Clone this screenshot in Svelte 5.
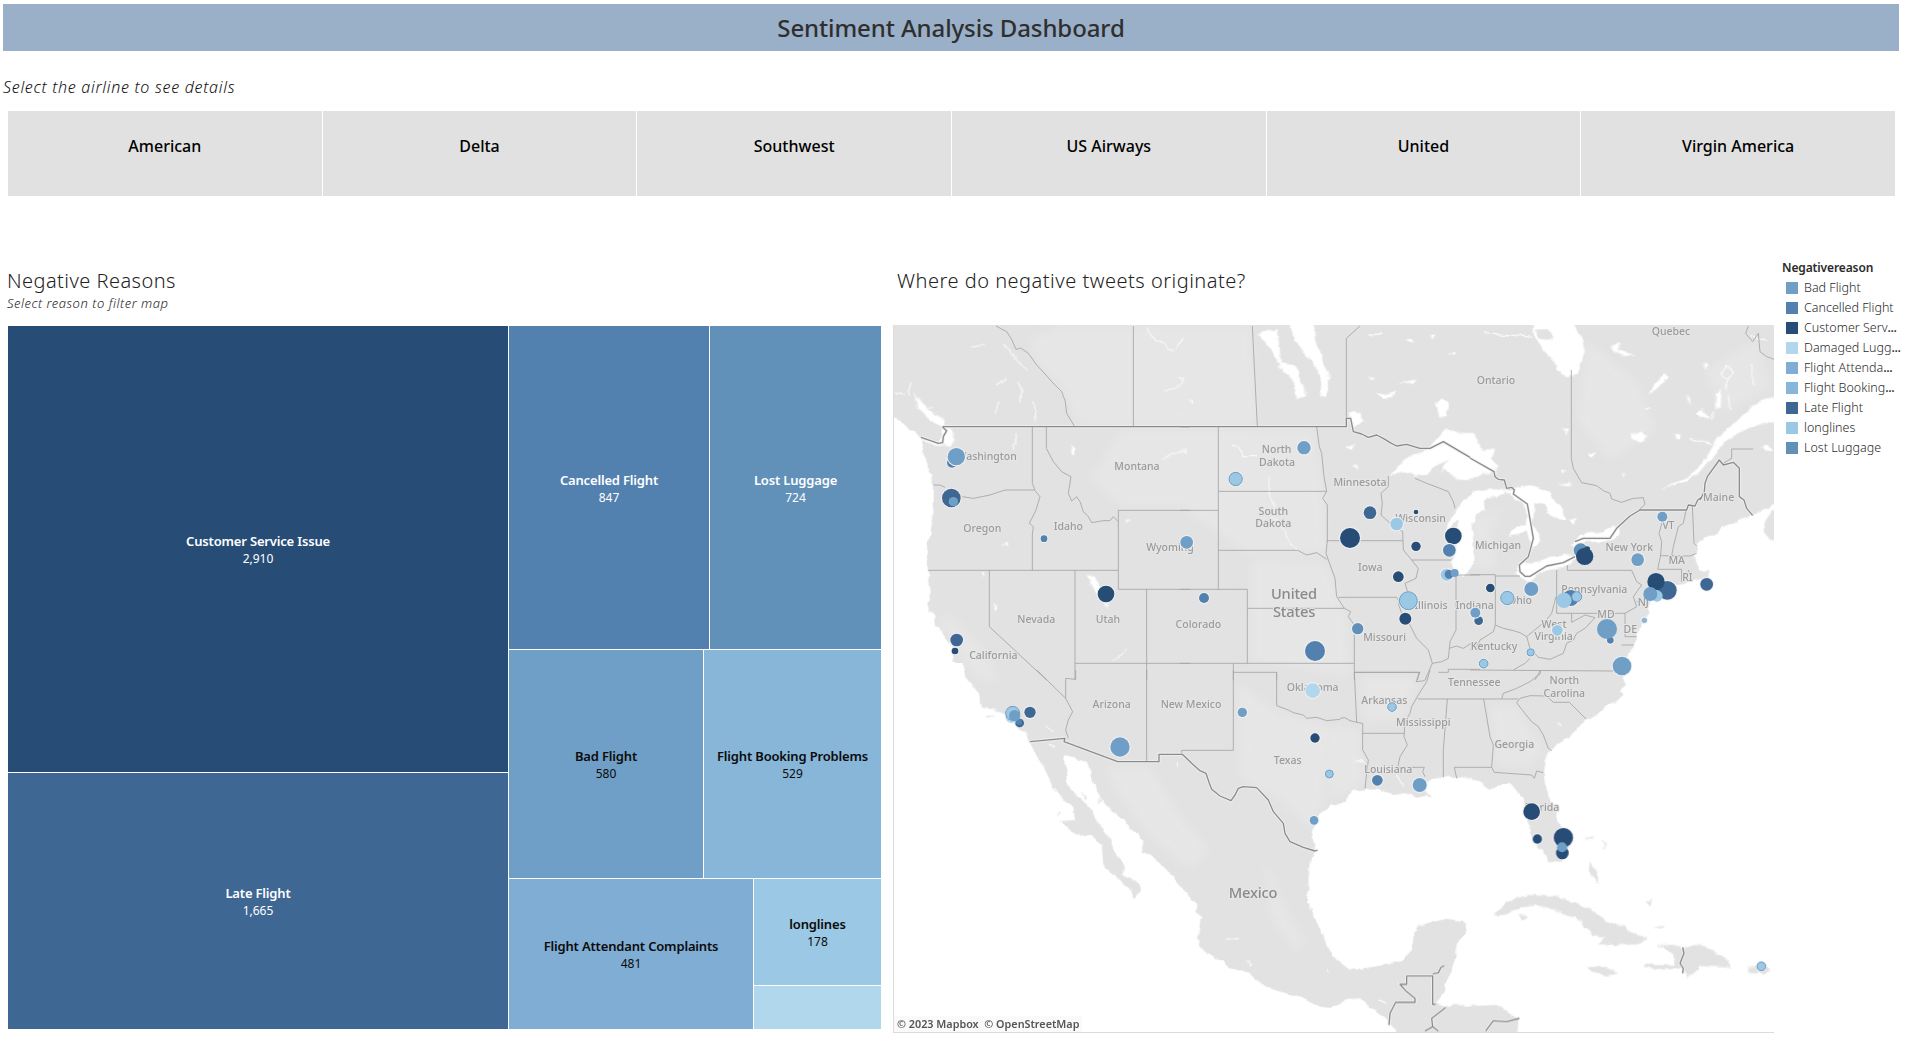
<script>
  const airlines = ['American', 'Delta', 'Southwest', 'US Airways', 'United', 'Virgin America'];

  const colors = {
    bad: '#6f9fc6',
    cancelled: '#5381af',
    customer: '#274d77',
    damaged: '#b0d7ec',
    attendant: '#7fadd3',
    booking: '#87b6d9',
    late: '#3e6793',
    longlines: '#9bc8e4',
    lost: '#6190b9'
  };

  const legend = [
    ['bad', 'Bad Flight', false],
    ['cancelled', 'Cancelled Flight', false],
    ['customer', 'Customer Serv', true],
    ['damaged', 'Damaged Lugg', true],
    ['attendant', 'Flight Attenda', true],
    ['booking', 'Flight Booking', true],
    ['late', 'Late Flight', false],
    ['longlines', 'longlines', false],
    ['lost', 'Lost Luggage', false]
  ];

  // Map geometry is split into sheets; each sheet has its own origin in map units.
  const sheets = {
    nw: [0, 0],
    n: [870, 0],
    ne: [1740, 0],
    sw: [0, 1050],
    se: [1320, 1050],
    lakes: [1440, 270]
  };
  const at = (s) => `translate(${sheets[s][0]} ${sheets[s][1]})`;

  const water = [
    ['nw', 'M75,215 L90,245 125,275 160,300 165,320 185,325 195,355 185,378 165,375 145,378 95,360 93,350 145,366 158,345 155,322 110,292 85,265Z'],
    ['nw', 'M592,765 L615,770 626,795 638,812 622,820 602,795Z M645,850 L658,852 650,865Z M543,375 L555,380 556,400 546,408Z M310,850 L322,860 320,875Z M705,600 L718,598 715,612Z M275,755 L284,752 280,768Z M335,675 L352,668 355,676Z'],
    ['n', 'M325,0 L400,0 405,60 425,110 448,175 440,228 420,225 425,175 400,130 375,100 345,60Z M230,40 L290,28 300,90 302,130 345,135 378,230 350,238 340,180 300,145 280,95 250,60Z M765,250 L790,235 805,255 800,290 775,290Z M505,275 L545,280 550,305 520,322Z M495,385 L525,372 510,390Z M520,435 L535,432 538,445Z M675,60 L695,55 700,68Z M590,220 L620,225 645,215 635,235 605,238Z M660,190 L710,175 700,188Z M805,98 L828,96 825,104Z M570,172 L590,176 575,180Z M25,240 L40,242 35,252Z M750,45 L765,48 758,58Z'],
    ['ne', 'M188,0 L188,45 215,75 225,100 250,120 265,155 290,172 325,165 330,130 345,95 335,50 300,0Z'],
    ['ne', 'M950,230 L912,235 870,242 835,270 790,310 745,350 725,385 700,430 660,465 620,485 578,507 640,487 695,452 735,402 775,355 830,327 880,310 950,305Z'],
    ['ne', 'M540,225 L555,185 585,160 598,168 575,190 555,215Z M480,345 L510,332 535,350 515,365 490,360Z M612,340 L635,345 632,356 615,352Z M275,325 L298,330 290,345Z M352,400 L378,398 365,412Z M425,75 L450,62 440,90 495,105 460,108 430,95Z M675,280 L695,265 720,295 690,290Z M740,225 L755,210 752,265 738,270Z M652,225 L662,235 660,255Z M700,130 L712,135 708,150Z M265,492 L305,490 300,500Z M275,445 L288,450 280,462Z M455,460 L468,462 462,472Z M872,382 L895,375 910,390 890,392Z'],
    ['lakes', 'M62,195 L90,160 130,135 175,120 195,85 235,55 270,70 310,68 335,115 372,120 365,140 385,165 375,188 345,190 300,210 260,205 240,190 225,178 212,188 235,152 200,165 170,190 140,200 120,185 90,190Z'],
    ['lakes', 'M400,240 L350,236 310,245 285,265 260,300 245,320 230,345 225,365 262,330 265,370 255,430 245,460 255,490 280,499 300,480 315,440 310,390 305,350 320,310 345,300 345,275 370,258 405,252 430,255Z'],
    ['lakes', 'M400,242 L445,270 468,300 470,345 440,350 415,380 450,374 470,362 478,390 492,418 512,385 488,340 495,280 520,285 545,320 590,330 580,300 555,275 540,245 480,228 430,238Z M600,330 L618,325 615,345Z'],
    ['lakes', 'M450,455 L435,488 470,512 530,482 600,465 625,440 590,435 540,440 490,462Z M608,405 L630,374 700,364 725,350 748,352 745,378 722,395 645,396 618,410Z']
  ];

  const ocean = [
    ['nw', 'M-40,270 L10,292 40,312 70,335 93,352 100,380 100,405 112,430 115,455 127,465 128,500 128,545 126,600 122,640 112,670 110,700 108,730 117,752 118,790 122,815 112,850 118,875 135,890 138,920 165,950 185,980 188,1010 200,1030 218,1055 218,1100 -40,1100Z'],
    ['sw', 'M217,-20 L225,20 245,45 270,72 275,112 310,118 345,135 360,155 385,175 408,185 420,213 425,230 445,260 460,290 480,330 487,355 515,380 550,410 555,450 515,452 540,480 580,500 600,495 635,525 640,590 690,630 722,660 730,683 752,665 745,640 715,625 700,615 705,590 690,565 665,535 665,510 640,480 620,450 605,420 580,390 550,370 535,345 530,300 520,260 535,253 560,268 590,275 600,300 605,330 625,370 640,400 680,435 710,455 715,475 745,490 760,520 755,545 790,560 830,600 865,640 890,670 918,700 920,730 935,745 930,780 920,805 945,850 1000,875 1020,895 1080,912 1110,940 1170,965 1230,980 1290,1010 1320,1014 1350,1002 1380,985 1415,990 1450,1015 1490,1050 1530,1095 -40,1120 -40,-20Z'],
    ['se', 'M1370,-495 L1332,-495 1290,-475 1270,-462 1245,-455 1210,-442 1180,-430 1160,-410 1120,-400 1110,-385 1100,-360 1092,-345 1095,-325 1105,-305 1120,-295 1138,-298 1135,-275 1110,-270 1080,-265 1050,-260 1020,-250 980,-235 965,-220 955,-195 955,-170 940,-145 920,-115 917,-85 910,-65 880,-30 865,-10 890,10 880,30 888,45 870,60 880,75 855,95 830,105 795,140 765,150 740,180 715,200 680,225 660,245 645,270 640,300 645,340 655,375 668,405 685,450 705,490 715,530 700,568 655,578 650,555 625,535 605,500 600,470 592,455 585,415 585,390 560,360 535,338 510,345 480,358 460,340 430,325 400,320 380,328 355,318 320,325 295,328 280,345 290,365 308,383 290,378 262,382 240,375 215,372 190,375 165,362 130,358 105,358 75,362 55,375 50,395 20,405 0,408 -30,430 -45,470 -55,500 -42,540 -62,580 -64,650 -65,700 -50,740 -20,790 0,845 20,870 60,900 130,890 190,880 220,870 245,840 252,790 265,768 310,755 350,747 395,752 408,765 405,790 385,815 378,850 370,885 360,905 350,930 345,960 320,995 340,1010 370,1005 430,1008 500,1005 530,1025 565,1050 562,1120 1370,1120Z']
  ];

  const land = [
    ['se', 'M493,735 L520,705 555,685 605,673 680,678 720,695 760,710 800,730 830,755 885,770 895,785 955,808 920,820 803,823 825,800 790,795 765,770 755,750 710,735 680,722 625,705 570,712 515,735Z M570,735 L592,740 580,752Z M775,890 L830,892 862,910 825,917 790,908Z'],
    ['se', 'M985,828 L1020,825 1055,835 1100,825 1140,838 1195,870 1200,892 1150,890 1110,888 1075,920 1055,895 1000,898 945,890 950,882 1030,885 1035,860 1010,840Z M1255,890 L1310,888 1320,900 1300,910 1258,908Z'],
    ['se', 'M783,580 L800,605 805,640 795,625 780,605Z M762,508 L790,503 788,508Z M818,510 L830,520 822,538 825,520Z M978,770 L1000,765 995,773Z M950,695 L965,690 960,708Z'],
    ['ne', 'M950,560 L905,575 882,610 882,640 905,660 950,665Z'],
    ['ne', 'M195,30 L235,28 250,45 245,60 205,55Z'],
    ['sw', 'M290,138 L315,139 300,143Z M505,425 L508,430 503,437Z M575,370 L590,380 588,388Z M625,382 L633,390 626,400Z']
  ];

  // Lighter terrain patches.
  const terrain = [
    ['nw', 'M420,60 L500,18 720,18 880,18 880,310 560,310 520,200 440,130Z M690,330 L900,330 900,560 700,560 600,480Z M140,900 L180,880 290,1000 330,1080 260,1080Z'],
    ['n', 'M0,18 L215,18 230,310 0,310Z M0,330 L400,330 430,510 440,700 200,700 0,560Z M210,720 L440,730 500,890 510,1070 210,1020Z'],
    ['sw', 'M1040,30 L1150,120 1320,170 1300,400 1260,480 1160,380 1050,330Z M640,290 L780,290 860,420 960,540 900,600 780,500 690,380Z M1120,560 L1180,700 1250,820 1220,850 1140,740Z'],
    ['se', 'M90,20 L260,20 220,150 100,150Z M480,100 L560,110 640,240 600,290 500,280Z M0,170 L90,180 100,340 0,390Z'],
    ['ne', 'M350,60 L500,180 560,330 420,420 320,300Z M700,150 L860,60 900,200 760,280Z M100,560 L60,640 80,740 20,750 0,600Z']
  ];

  const streams = [
    ['nw', 'M240,80 L262,75 285,72 M318,282 L325,240 M320,195 L345,180 348,172 M385,185 L395,210 392,245 M432,240 L438,300 M340,72 L375,115 410,148 M370,390 L380,340 M815,415 L850,402 885,388 888,400 M770,25 L800,65 850,90 M858,88 L880,55 M820,210 L860,205 880,175 862,170 M668,1025 L695,1005 710,985 M58,225 L60,185 M12,215 L45,222 M100,265 L130,262'],
    ['n', 'M155,375 L175,382 190,410 235,410 M265,470 L270,530 285,560 280,590 310,625 325,665 350,690 M0,400 L20,395 M0,175 L12,188 M565,45 L610,42'],
    ['ne', 'M45,38 L120,45 185,52 M770,135 L755,160 770,180 790,160 770,135 M770,180 V210 M845,135 L852,195 M660,355 L730,375 M735,275 L720,300 M775,225 L780,270 M525,270 L540,262 M840,50 L890,62'],
    ['sw', 'M470,165 L488,188 M480,218 L492,235 M860,278 L866,290 M1012,808 L1045,806 M1070,872 L1085,888 M1308,895 L1315,905'],
    ['se', 'M75,270 L105,280 110,300 M200,310 L222,350 M680,155 L692,168 M145,990 L175,1000']
  ];

  const states = [
    ['nw', 'M318,18 L350,35 365,58 378,88 392,84 415,100 440,135 468,165 485,185 515,215 526,245 530,280 553,318 M730,18 V320 M427,320 V490 L435,510 H345 L300,525 250,535 217,530 M130,495 L150,495 165,502 M435,512 L450,530 438,570 418,610 430,620 427,645 V752 M115,751 H685 M469,320 V385 L490,425 515,455 543,470 535,520 545,543 560,530 570,545 580,575 595,590 605,608 640,602 660,602 670,590 685,605 M685,571 H900 M685,571 V808 H900 M298,751 V920 L470,1080 M555,751 V1080 M770,808 V1080 M555,1030 H900'],
    ['n', 'M217,18 L232,320 M499,295 V55 L540,18 M115,320 V808 M0,571 H115 M0,808 H202 V1030 M115,514 H440 M115,691 H353 L380,705 410,698 440,718 M410,320 L418,380 425,400 432,470 440,514 428,535 442,555 V662 L438,700 445,720 465,775 470,830 493,865 512,875 505,890 523,915 V1080 M440,662 H668 M202,865 H493 M475,832 H650 L660,850 M0,1030 H523 M160,1030 V1080 M160,1057 H290 V1080 M523,1057 H717 L712,1080 M625,468 V500 L603,520 607,550 603,585 625,605 655,625 668,635 670,690 695,720 715,745 708,775 675,790 683,815 M695,720 H815 M705,475 L740,490 780,505 805,515 820,545 825,565 M828,765 V930 L810,965 805,1015 785,1025 757,1030 735,1080 M655,850 L665,880 690,915 710,955 745,990 757,1030 M808,985 L830,978 850,985 870,972 890,965 M828,765 H900 M775,1057 H805 V1048 H900'],
    ['ne', 'M304,150 V415 L310,445 335,488 380,497 400,512 420,520 425,537 455,547 490,535 520,533 525,553 505,572 M835,18 L827,40 848,65 865,40 870,95 890,110 912,118 M760,430 L785,415 785,387 850,387 M0,764 H76 V915 L100,925 130,932 150,938 170,950 200,925 225,905 245,880 258,830 M76,768 H150 M260,750 V880 H465 M292,735 V751 H485 L500,785 515,795 490,830 500,860 465,880 M465,880 V950 H500 M305,880 V907 L345,885 375,893 345,925 320,940 310,960 290,970 280,1000 240,1018 205,1012 180,985 170,950 M76,915 L70,935 30,960 20,980 0,990 M180,1015 L165,1030 130,1050 M0,1050 L430,1053 M210,1053 L195,1080 M577,605 L567,640 575,665 572,705 563,748 M648,571 L640,610 625,620 610,680 605,708 M572,707 L660,708 680,700 M667,555 L672,670 680,678 M563,748 H635 V785 M655,750 L660,768 M500,845 L530,850 M455,975 H490'],
    ['sw', 'M557,0 V28 L527,25 527,85 548,125 535,150 527,180 535,205 M440,0 L527,85 M770,0 V275 M1030,0 V241 H875 V250 M1160,7 V107 L1195,120 1210,128 1240,135 1250,145 1280,142 1310,152 1350,148'],
    ['se', 'M73,7 L80,157 98,160 V240 L115,270 110,310 105,355 M30,145 L45,143 60,152 80,157 M98,190 H222 M73,7 H270 L258,35 285,32 M300,0 L290,35 265,75 245,110 240,130 225,155 222,200 232,225 210,260 203,292 H283 L278,305 285,320 M263,87 H565 M352,87 L340,240 V322 M461,87 L480,200 490,225 485,292 H373 L380,325 M485,292 L493,307 605,315 613,325 620,303 640,308 M632,2 L630,12 600,35 560,55 520,70 515,87 M560,98 L575,118 605,155 625,170 640,195 655,235 665,242 M560,98 L570,85 600,77 650,78 670,97 718,97 768,147']
  ];

  const nations = [
    ['nw', 'M157,320 H900 M93,352 L145,370 158,368 160,350 170,332 158,322'],
    ['n', 'M0,320 H499 V295 H512 L520,335 545,342 565,352 590,345 615,358 630,368 650,378 680,373 720,385 750,385 790,365 870,412'],
    ['lakes', 'M300,144 L372,185 375,200 385,208 403,210 410,235 425,232 433,240 430,252 472,282 490,385 475,440 448,465 450,485 465,499 480,499 530,468 580,458 615,440 M615,395 L640,385 720,385 740,355 780,318 810,300 950,300 955,285 975,288 983,270 995,262'],
    ['ne', 'M690,540 L703,515 705,490 712,470 748,420 760,435 790,427 808,445 808,530 822,540 830,565 848,586'],
    ['sw', 'M420,215 L525,205 522,215 683,275 807,275 807,253 877,253 905,280 930,302 948,310 958,340 965,358 990,378 1023,392 1035,375 1045,355 1060,350 1100,353 1135,390 1150,425 1180,460 1185,490 1200,515 1240,532 1275,543 1283,540'],
    ['se', 'M230,918 H308 V1003 H317 M308,912 L325,908 333,892 343,887 M230,918 V943 H210 L230,965 255,985 255,997 H197 L180,1030 177,1065 M347,1013 L305,1045 308,1070 285,1083 M308,1070 L325,1083 M467,1083 L490,1052 530,1055 568,1045 M1058,832 L1062,850 1050,880 1060,895 1058,910']
  ];

  const labels = [
    ['nw', 290, 419, 'Washington'], ['nw', 741, 449, 'Montana'], ['nw', 277, 635, 'Oregon'],
    ['nw', 535, 630, 'Idaho'], ['nw', 840, 694, 'Wyoming'], ['nw', 439, 908, 'Nevada'],
    ['nw', 654, 908, 'Utah'], ['nw', 310, 1018, 'California'],
    ['n', 290, 399, 'North'], ['n', 291, 437, 'Dakota'], ['n', 280, 585, 'South'], ['n', 280, 622, 'Dakota'],
    ['n', 540, 497, 'Minnesota'], ['n', 722, 605, 'Wisconsin'], ['n', 571, 752, 'Iowa'],
    ['n', 55, 923, 'Colorado'], ['n', 614, 964, 'Missouri'], ['n', 753, 867, 'Illinois'],
    ['ne', 603, 45, 'Quebec'], ['ne', 78, 191, 'Ontario'], ['ne', 746, 543, 'Maine'],
    ['ne', 84, 687, 'Michigan'], ['ne', 478, 693, 'New York'], ['ne', 595, 626, 'VT'],
    ['ne', 620, 731, 'MA'], ['ne', 652, 782, 'RI'], ['ne', 373, 818, 'Pennsylvania'],
    ['ne', 150, 852, 'Ohio'], ['ne', 14, 867, 'Indiana'], ['ne', 520, 858, 'NJ'],
    ['ne', 408, 895, 'MD'], ['ne', 481, 940, 'DE'], ['ne', 252, 923, 'West'],
    ['ne', 251, 961, 'Virginia'], ['ne', 72, 989, 'Kentucky'],
    ['sw', 665, 114, 'Arizona'], ['sw', 903, 114, 'New Mexico'], ['sw', 1268, 62, 'Oklahoma'],
    ['sw', 1193, 281, 'Texas'], ['se', 433, 48, 'Tennessee'], ['se', 163, 101, 'Arkansas'],
    ['se', 703, 42, 'North'], ['se', 703, 80, 'Carolina'], ['se', 280, 167, 'Mississippi'],
    ['se', 553, 235, 'Georgia'], ['se', 175, 309, 'Louisiana'], ['se', 636, 422, 'Florida']
  ];

  const countries = [
    ['n', 342, 836, 'United'], ['n', 342, 890, 'States'], ['sw', 1089, 685, 'Mexico']
  ];

  // sheet, x, y, radius, reason, outlined
  const marks = [
    ['nw', 186, 428, 15, 'cancelled'], ['nw', 199, 410, 26, 'bad'], ['nw', 184, 534, 28, 'late'],
    ['nw', 190, 545, 14, 'bad', false, true], ['nw', 462, 656, 10, 'cancelled'], ['nw', 648, 822, 25, 'customer'],
    ['nw', 200, 960, 19, 'late'], ['nw', 195, 993, 10, 'customer'],
    ['n', 20, 667, 19, 'bad'], ['n', 372, 383, 20, 'bad'], ['n', 167, 477, 20, 'longlines', true],
    ['n', 570, 578, 19, 'late'], ['n', 510, 654, 30, 'customer'], ['n', 650, 612, 19, 'longlines'],
    ['n', 708, 576, 7, 'customer'], ['n', 708, 679, 14, 'customer'], ['n', 820, 648, 25, 'customer'],
    ['n', 808, 691, 19, 'cancelled'], ['n', 655, 770, 16, 'customer'], ['n', 800, 764, 18, 'longlines'],
    ['n', 807, 763, 13, 'cancelled', false, true], ['n', 824, 759, 12, 'bad', false, true], ['n', 72, 834, 15, 'cancelled'],
    ['n', 685, 842, 27, 'longlines', true], ['n', 676, 896, 18, 'customer'], ['n', 533, 926, 17, 'lost'],
    ['n', 405, 993, 30, 'cancelled'],
    ['ne', 26, 902, 13, 'late'], ['ne', 16, 878, 15, 'bad'], ['ne', 61, 804, 13, 'customer'],
    ['ne', 112, 834, 20, 'longlines', true], ['ne', 184, 807, 21, 'bad'], ['ne', 332, 691, 21, 'lost'],
    ['ne', 352, 687, 8, 'customer', false, true], ['ne', 344, 709, 26, 'customer', false, true], ['ne', 503, 719, 19, 'bad'],
    ['ne', 577, 590, 15, 'bad'], ['ne', 302, 834, 24, 'cancelled'], ['ne', 320, 830, 15, 'longlines', true, true],
    ['ne', 282, 841, 23, 'longlines', false, true], ['ne', 592, 811, 28, 'late'], ['ne', 558, 785, 26, 'customer', false, true],
    ['ne', 561, 828, 17, 'longlines', false, true], ['ne', 541, 822, 21, 'bad', false, true], ['ne', 710, 793, 19, 'late'],
    ['ne', 523, 901, 8, 'booking'], ['ne', 421, 961, 10, 'cancelled'], ['ne', 411, 927, 30, 'bad', false, true],
    ['ne', 262, 931, 16, 'longlines'], ['ne', 182, 997, 11, 'longlines', true], ['ne', 41, 1031, 13, 'longlines', true],
    ['ne', 456, 1038, 28, 'bad'],
    ['sw', 365, 140, 18, 'damaged'], ['sw', 368, 130, 21, 'longlines', true, true], ['sw', 389, 159, 13, 'late', false, true],
    ['sw', 387, 156, 9, 'cancelled', false, true], ['sw', 374, 137, 17, 'bad', false, true], ['sw', 420, 127, 17, 'late'],
    ['sw', 690, 231, 29, 'bad'], ['sw', 1057, 127, 14, 'bad'], ['sw', 1268, 62, 22, 'damaged'],
    ['sw', 1275, 204, 14, 'customer'], ['sw', 1318, 312, 12, 'longlines', true], ['sw', 1272, 451, 13, 'bad'],
    ['se', 186, 111, 13, 'longlines', true], ['se', 142, 331, 16, 'cancelled'], ['se', 269, 345, 21, 'bad'],
    ['se', 605, 425, 25, 'customer'], ['se', 622, 507, 14, 'customer'], ['se', 700, 503, 29, 'customer'],
    ['se', 697, 549, 19, 'customer', false, true], ['se', 696, 532, 15, 'bad', false, true], ['se', 1294, 889, 13, 'longlines', true]
  ];
</script>

{#snippet tile(kind, name, value)}
  <div class="tile {kind}">
    {#if name}
      <strong>{name}</strong>
      <span>{value}</span>
    {/if}
  </div>
{/snippet}

{#snippet layer(items)}
  {#each items as [s, d]}
    <path transform={at(s)} {d} />
  {/each}
{/snippet}

<main class="dashboard">
  <h1>Sentiment Analysis Dashboard</h1>
  <p class="hint">Select the airline to see details</p>

  <div class="airlines">
    {#each airlines as airline}
      <div class="airline">{airline}</div>
    {/each}
  </div>

  <div class="content">
    <section class="reasons">
      <h2>Negative Reasons</h2>
      <p class="sub">Select reason to filter map</p>
      <div class="treemap">
        <div class="col">
          {@render tile('customer', 'Customer Service Issue', '2,910')}
          {@render tile('late', 'Late Flight', '1,665')}
        </div>
        <div class="col">
          <div class="row top">
            {@render tile('cancelled', 'Cancelled Flight', '847')}
            {@render tile('lost', 'Lost Luggage', '724')}
          </div>
          <div class="row middle">
            {@render tile('bad', 'Bad Flight', '580')}
            {@render tile('booking', 'Flight Booking Problems', '529')}
          </div>
          <div class="row bottom">
            {@render tile('attendant', 'Flight Attendant Complaints', '481')}
            <div class="stack">
              {@render tile('longlines', 'longlines', '178')}
              {@render tile('damaged')}
            </div>
          </div>
        </div>
      </div>
    </section>

    <section class="origin">
      <h2>Where do negative tweets originate?</h2>
      <div class="map">
        <svg viewBox="9 15 2643 2124" preserveAspectRatio="none">
          <defs>
            <filter id="rugged" filterUnits="userSpaceOnUse" x="-60" y="-60" width="2800" height="2300">
              <feTurbulence type="fractalNoise" baseFrequency="0.035" numOctaves="3" seed="4" />
              <feDisplacementMap in="SourceGraphic" scale="16" xChannelSelector="R" yChannelSelector="G" />
            </filter>
            <filter id="soft" x="-10%" y="-10%" width="120%" height="120%">
              <feGaussianBlur stdDeviation="14" />
            </filter>
          </defs>
          <rect class="ground" x="-60" y="-60" width="2800" height="2300" />
          <g class="terrain" filter="url(#soft)">{@render layer(terrain)}</g>
          <g filter="url(#rugged)">
            <g class="streams">{@render layer(streams)}</g>
            <g class="water">{@render layer(water)}</g>
            <g class="ocean">{@render layer(ocean)}</g>
            <g class="land">{@render layer(land)}</g>
          </g>
          <g class="casing">{@render layer(nations)}</g>
          <g class="states">{@render layer(states)}</g>
          <g class="nations">{@render layer(nations)}</g>
          <g class="labels">
            {#each labels as [s, x, y, text]}
              <text transform={at(s)} {x} {y}>{text}</text>
            {/each}
          </g>
          <g class="countries">
            {#each countries as [s, x, y, text]}
              <text transform={at(s)} {x} {y}>{text}</text>
            {/each}
          </g>
          <g>
            {#each marks as [s, cx, cy, r, kind, outlined, stacked]}
              <g transform={at(s)}>
                {#if !stacked}
                  <circle class="halo" {cx} {cy} r={r + 3} />
                {/if}
                <circle {cx} {cy} {r} fill={colors[kind]} />
                {#if outlined}
                  <circle class="ring" {cx} {cy} {r} />
                {/if}
              </g>
            {/each}
          </g>
        </svg>
        <div class="credit">© 2023 Mapbox&nbsp; © OpenStreetMap</div>
      </div>
    </section>

    <aside class="legend">
      <h3>Negativereason</h3>
      <ul>
        {#each legend as [kind, text, cut]}
          <li><i class={kind}></i><span>{text}{#if cut}<b>...</b>{/if}</span></li>
        {/each}
      </ul>
    </aside>
  </div>
</main>

<style>
  :global(body) {
    margin: 0;
    background: #fff;
  }
  .dashboard {
    box-sizing: border-box;
    width: 1905px;
    height: 1038px;
    overflow: hidden;
    padding: 4px 6px 0 3px;
    font-family: 'Noto Sans', 'Open Sans', sans-serif;
    color: #333;
  }
  h1, h2, h3, p, ul {
    margin: 0;
    padding: 0;
    font-weight: 400;
  }
  h1 {
    height: 47px;
    background: #9aafc8;
    font-size: 24px;
    font-weight: 500;
    letter-spacing: -0.1px;
    line-height: 48px;
    text-align: center;
    color: #2f2f2f;
  }
  .hint {
    height: 60px;
    box-sizing: border-box;
    font-size: 16px;
    font-weight: 300;
    font-style: italic;
    letter-spacing: 0.72px;
    line-height: 72px;
    color: #111;
  }
  .airlines {
    display: grid;
    grid-template-columns: repeat(6, 1fr);
    gap: 1px;
    height: 85px;
    margin: 0 4px 0 5px;
  }
  .airline {
    background: #e1e1e1;
    color: #000;
    font-size: 16px;
    font-weight: 500;
    line-height: 70px;
    text-align: center;
  }
  .content {
    display: flex;
    padding-left: 5px;
    height: 842px;
  }
  .reasons {
    width: 873px;
    padding-top: 70px;
  }
  h2 {
    font-size: 20px;
    font-weight: 300;
    letter-spacing: 0.45px;
    line-height: 30px;
    color: #222;
  }
  .reasons h2, .sub { margin-left: -1px; }
  .sub {
    height: 30px;
    font-size: 13px;
    font-weight: 300;
    font-style: italic;
    letter-spacing: 0.52px;
    line-height: 15px;
    color: #1c1c1c;
  }
  .treemap {
    display: grid;
    grid-template-columns: 500px 372px;
    gap: 1px;
    height: 703px;
  }
  .col {
    display: grid;
    grid-template-rows: 446px 256px;
    gap: 1px;
  }
  .col + .col {
    grid-template-rows: 323px 228px 150px;
  }
  .row {
    display: grid;
    gap: 1px;
  }
  .top { grid-template-columns: 200px 171px; }
  .middle { grid-template-columns: 194px 177px; }
  .bottom { grid-template-columns: 244px 127px; }
  .stack {
    display: grid;
    grid-template-rows: 106px 43px;
    gap: 1px;
  }
  .tile {
    box-sizing: border-box;
    display: flex;
    flex-direction: column;
    align-items: center;
    justify-content: center;
    padding-top: 2px;
    font-size: 13px;
    line-height: 18px;
    color: #0b0b0b;
    white-space: nowrap;
  }
  .tile strong {
    font-weight: 600;
    letter-spacing: -0.17px;
  }
  .tile span { font-size: 12px; font-weight: 400; }
  .tile.customer, .tile.late, .tile.cancelled, .tile.lost { color: #fff; }
  .customer { background: #274d77; }
  .late { background: #3e6793; }
  .cancelled { background: #5381af; }
  .lost { background: #6190b9; }
  .bad { background: #6f9fc6; }
  .booking { background: #87b6d9; }
  .attendant { background: #7fadd3; }
  .longlines { background: #9bc8e4; }
  .damaged { background: #b0d7ec; }

  .origin {
    width: 881px;
    margin-left: 12px;
    padding-top: 70px;
  }
  .origin h2 {
    height: 59px;
    padding-left: 4px;
    letter-spacing: 0.5px;
  }
  .map {
    position: relative;
    width: 881px;
    height: 708px;
    overflow: hidden;
  }
  .map::after {
    content: '';
    position: absolute;
    inset: 0;
    border: solid #dcdcdc;
    border-width: 0 0 1px 1px;
  }
  svg {
    display: block;
    width: 881px;
    height: 708px;
  }
  .ground, .land { fill: #e2e2e2; }
  .terrain { fill: #e6e6e6; }
  .water { fill: #fff; stroke: #efefef; stroke-width: 3; }
  .ocean { fill: #fff; }
  .land { stroke: #ececec; stroke-width: 3; }
  .streams { fill: none; stroke: #f7f7f7; stroke-width: 4; }
  .states { fill: none; stroke: #a4a4a4; stroke-width: 2.5; stroke-linejoin: round; }
  .casing { fill: none; stroke: #efefef; stroke-width: 9; }
  .nations { fill: none; stroke: #8c8c8c; stroke-width: 4; stroke-linejoin: round; }
  text {
    text-anchor: middle;
    paint-order: stroke;
    stroke: #e6e6e6;
    stroke-width: 6;
    stroke-linejoin: round;
    font-weight: 500;
  }
  .labels { font-size: 31.5px; fill: #9b9b9b; }
  .countries { font-size: 44px; fill: #8a8a8a; letter-spacing: -0.5px; }
  .halo { fill: #f0f0f0; }
  .ring { fill: none; stroke: #5f8fb8; stroke-width: 2.5; }
  .credit {
    position: absolute;
    left: 1px;
    bottom: 1px;
    padding: 0 3px;
    background: rgba(250, 250, 250, 0.9);
    font-size: 10.8px;
    font-weight: 600;
    line-height: 16px;
    color: #555;
  }
  .legend {
    padding: 62px 0 0 8px;
    flex: none;
    color: #2a2a2a;
  }
  h3 {
    font-size: 12px;
    font-weight: 600;
    letter-spacing: -0.12px;
    line-height: 20px;
  }
  ul { list-style: none; }
  li {
    display: flex;
    align-items: center;
    height: 20px;
    padding-left: 4px;
    font-size: 12.5px;
    font-weight: 300;
    white-space: nowrap;
  }
  li span { margin-top: -1px; }
  b { font-weight: 500; letter-spacing: -0.4px; }
  i {
    width: 12px;
    height: 12px;
    margin-right: 6px;
  }
</style>
